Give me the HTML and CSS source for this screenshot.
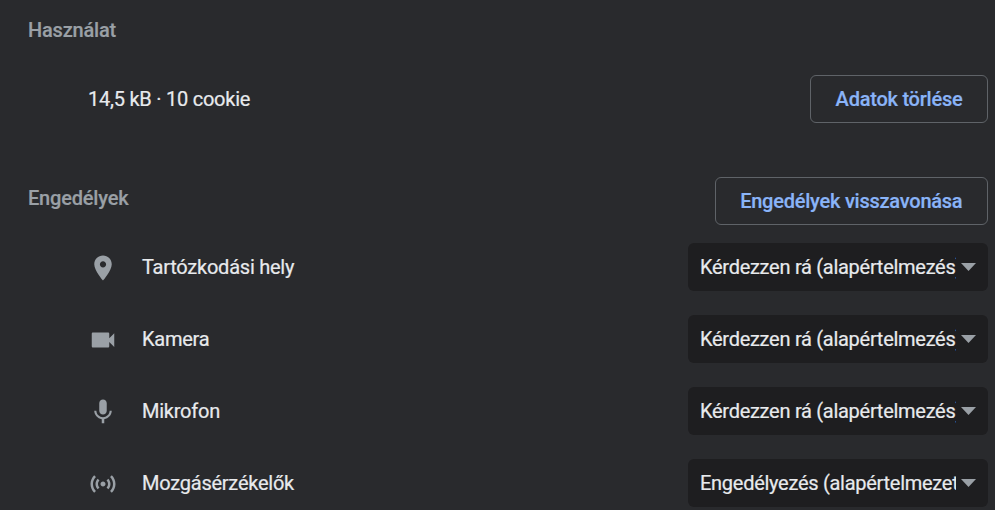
FILE: index.html
```html
<!DOCTYPE html>
<html lang="hu">
    <head>
        <meta charset="UTF-8">
        <meta name="viewport" content="width=device-width, initial-scale=1.0">
        <title>Webhelybeállítások</title>

        <link rel="stylesheet" href="styles.css">
    </head>
    <body>
        <section class="usage">
            <h2>Használat</h2>
            <div class="usage-row">
                <span>14,5 kB · 10 cookie</span>
                <button>Adatok törlése</button>
            </div>
        </section>

        <section class="permissions">
            <div class="heading-row">
                <h2>Engedélyek</h2>
                <button>Engedélyek visszavonása</button>
            </div>
            <div class="permission">
                <svg class="icon" viewBox="0 0 24 24"><path d="M12 2C8.13 2 5 5.13 5 9c0 5.25 7 13 7 13s7-7.75 7-13c0-3.87-3.13-7-7-7zm0 9.5c-1.38 0-2.5-1.12-2.5-2.5s1.12-2.5 2.5-2.5 2.5 1.12 2.5 2.5-1.12 2.5-2.5 2.5z"/></svg>
                <span class="name">Tartózkodási hely</span>
                <div class="select">
                    <select>
                        <option>Kérdezzen rá (alapértelmezés)</option>
                    </select>
                </div>
            </div>
            <div class="permission">
                <svg class="icon" viewBox="0 0 24 24"><path d="M17 10.5V7c0-.55-.45-1-1-1H4c-.55 0-1 .45-1 1v10c0 .55.45 1 1 1h12c.55 0 1-.45 1-1v-3.5l4 4v-11l-4 4z"/></svg>
                <span class="name">Kamera</span>
                <div class="select">
                    <select>
                        <option>Kérdezzen rá (alapértelmezés)</option>
                    </select>
                </div>
            </div>
            <div class="permission">
                <svg class="icon" viewBox="0 0 24 24"><path d="M12 14c1.66 0 2.99-1.34 2.99-3L15 5c0-1.66-1.34-3-3-3S9 3.34 9 5v6c0 1.66 1.34 3 3 3zm5.3-3c0 3-2.54 5.1-5.3 5.1S6.7 14 6.7 11H5c0 3.41 2.72 6.23 6 6.72V21h2v-3.28c3.28-.48 6-3.3 6-6.72h-1.7z"/></svg>
                <span class="name">Mikrofon</span>
                <div class="select">
                    <select>
                        <option>Kérdezzen rá (alapértelmezés)</option>
                    </select>
                </div>
            </div>
            <div class="permission">
                <svg class="icon" viewBox="0 0 24 24"><path d="M7.76 16.24C6.67 15.16 6 13.66 6 12s.67-3.16 1.76-4.24l1.42 1.42C8.45 9.9 8 10.9 8 12c0 1.1.45 2.1 1.17 2.83l-1.41 1.41zm8.48 0C17.33 15.16 18 13.66 18 12s-.67-3.16-1.76-4.24l-1.42 1.42C15.55 9.9 16 10.9 16 12c0 1.1-.45 2.1-1.17 2.83l1.41 1.41zM12 10c-1.1 0-2 .9-2 2s.9 2 2 2 2-.9 2-2-.9-2-2-2zm8 2c0 2.21-.9 4.21-2.35 5.65l1.42 1.42C20.88 17.26 22 14.76 22 12s-1.12-5.26-2.93-7.07l-1.42 1.42C19.1 7.79 20 9.79 20 12zM6.35 6.35L4.93 4.93C3.12 6.74 2 9.24 2 12s1.12 5.26 2.93 7.07l1.42-1.42C4.9 16.21 4 14.21 4 12s.9-4.21 2.35-5.65z"/></svg>
                <span class="name">Mozgásérzékelők</span>
                <div class="select">
                    <select>
                        <option>Engedélyezés (alapértelmezett)</option>
                    </select>
                </div>
            </div>
        </section>
    </body>
</html>
```

FILE: styles.css
```css
* {
    box-sizing: border-box;
}

body {
    margin: 0;
    height: 510px;
    overflow: hidden;
    padding: 15px 7px 0 28px;
    background: #292a2d;
    color: #e8eaed;
    font-family: Roboto, sans-serif;
    font-size: 20px;
    line-height: 30px;
    letter-spacing: -0.24px;
    -webkit-text-stroke: 0.2px;
}

h2 {
    margin: 0;
    color: #9aa0a6;
    font-size: inherit;
    font-weight: 500;
    letter-spacing: -0.2px;
}

button {
    height: 48px;
    padding: 0 24.6px;
    border: 1px solid #5f6368;
    border-radius: 6px;
    background: none;
    color: #8ab4f8;
    font: inherit;
    font-weight: 500;
    letter-spacing: inherit;
}

.usage-row {
    display: flex;
    justify-content: space-between;
    align-items: center;
    margin-top: 30px;
    padding-left: 60px;
}

.permissions {
    margin-top: 54px;
}
.heading-row {
    display: flex;
    justify-content: space-between;
    align-items: center;
    margin-bottom: 6px;
}
.heading-row h2 {
    margin-bottom: 6px;
}

.permission {
    display: flex;
    align-items: center;
    height: 72px;
    padding-left: 60px;
}
.icon {
    width: 30px;
    height: 30px;
    margin: 2px 24px 0 0;
    fill: #9aa0a6;
}
.name {
    flex: 1;
}

.select {
    position: relative;
    width: 300px;
    height: 48px;
}
.select select {
    appearance: none;
    width: 100%;
    height: 100%;
    padding: 0 32px 0 12px;
    border: none;
    border-radius: 6px;
    background: #1e1e20;
    color: inherit;
    font: inherit;
    letter-spacing: -0.28px;
}
/* dropdown arrow */
.select::after {
    content: '';
    position: absolute;
    top: 20px;
    right: 12px;
    width: 15px;
    height: 8px;
    background: #9aa0a6;
    clip-path: polygon(0 0, 100% 0, 50% 100%);
    pointer-events: none;
}
```
